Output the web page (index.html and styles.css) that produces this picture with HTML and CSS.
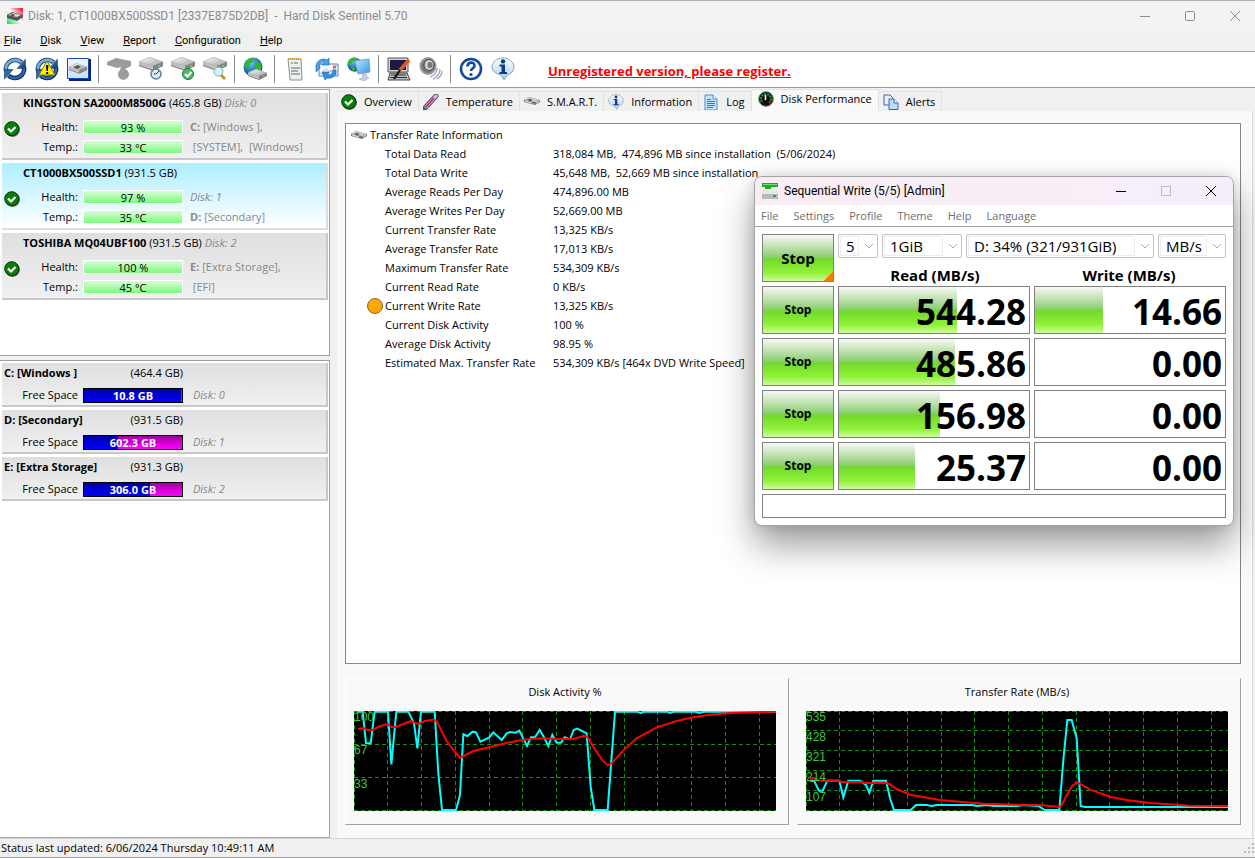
FILE: index.html
```
<!DOCTYPE html>
<html lang="en">
<head>
  <meta charset="UTF-8" />
  <meta name="viewport" content="width=device-width, initial-scale=1.0" />
  <title>Hard Disk Sentinel 5.70</title>
  <link rel="stylesheet" href="styles.css">
</head>
<body>
  <!-- shared icon shapes -->
  <svg class="defs" width="0" height="0">
    <defs>
      <linearGradient id="gBlue" x1="0" y1="0" x2="1" y2="1"><stop offset="0" stop-color="#8fc4ea"/><stop offset=".5" stop-color="#2f6dab"/><stop offset="1" stop-color="#0b2c5e"/></linearGradient>
      <linearGradient id="gDisk" x1="0" y1="0" x2="1" y2="1"><stop offset="0" stop-color="#fafafa"/><stop offset="1" stop-color="#a4a4a4"/></linearGradient>
      <radialGradient id="gGlobe" cx=".4" cy=".3" r=".7"><stop offset="0" stop-color="#6cc4ff"/><stop offset="1" stop-color="#0038a8"/></radialGradient>
      <linearGradient id="gScreen" x1="0" y1="0" x2="1" y2="1"><stop offset="0" stop-color="#b8f0ff"/><stop offset="1" stop-color="#2e93e6"/></linearGradient>
      <linearGradient id="gBubble" x1="0" y1="0" x2="0" y2="1"><stop offset="0" stop-color="#ffffff"/><stop offset="1" stop-color="#a9cfee"/></linearGradient>
      <linearGradient id="gApp" x1="1" y1="0" x2="0" y2="1"><stop offset="0" stop-color="#f00018"/><stop offset=".5" stop-color="#ffffff"/><stop offset="1" stop-color="#00e048"/></linearGradient>
    </defs>
    <symbol id="sync" viewBox="0 0 24 24">
      <path d="M3 14A9.300 9.300 0 0 1 18.500 5.500" fill="none" stroke="#24507e" stroke-width="4.600"/>
      <path d="M3 13.500A9.300 9.300 0 0 1 18 5" fill="none" stroke="#79aed8" stroke-width="2.600"/>
      <path d="M22.500 2v9.500H14z" fill="url(#gBlue)" stroke="#24507e" stroke-width=".6"/>
      <path d="M21 10A9.300 9.300 0 0 1 5.500 18.500" fill="none" stroke="#0d2f62" stroke-width="4.600"/>
      <path d="M21 10.500A9.300 9.300 0 0 1 6 19" fill="none" stroke="#2d66a4" stroke-width="2.400"/>
      <path d="M1.500 22v-9.500H10z" fill="#2f69a6" stroke="#0d2f62" stroke-width=".6"/>
    </symbol>
    <symbol id="hdd" viewBox="0 0 24 14">
      <path d="M0 5L10 0l14 5v4l-10 5L0 9z" fill="#777"/>
      <path d="M0 5L10 0l14 5-10 4z" fill="url(#gDisk)" stroke="#b4b4b4" stroke-width=".5"/>
      <path d="M0 5l14 4v4L0 8z" fill="#c0c0c0"/><path d="M14 9l10-4v4l-10 4z" fill="#858585"/>
      <circle cx="20" cy="9" r="1" fill="#6ddc50"/>
    </symbol>
    <symbol id="hddSmall" viewBox="0 0 16 8">
      <path d="M0 3l5-3 11 3v2l-5 3L0 5z" fill="#777"/><path d="M0 3l5-3 11 3-5 2z" fill="#ccc"/>
      <path d="M3 3l3-1 3 1-3 1z" fill="#444"/><path d="M1 4l7 2M12 6l3-2" stroke="#eee"/>
    </symbol>
    <symbol id="ok" viewBox="0 0 16 16">
      <circle cx="8.6" cy="8.6" r="7.3" fill="#555"/><circle cx="7.7" cy="7.7" r="7" fill="#088008" stroke="#003800"/>
      <path d="M4 7.5l3 3L11.5 6" fill="none" stroke="#fff" stroke-width="2.2"/>
    </symbol>
    <symbol id="info" viewBox="0 0 24 24">
      <path d="M12 1c6 0 11 4 11 9 0 4-3 7-7 8l-3 5-3-5c-5-1-9-4-9-8 0-5 5-9 11-9z" fill="url(#gBubble)" stroke="#86a3c0"/>
      <circle cx="12" cy="4.400" r="2.200" fill="#0c3a8c"/><path d="M8.500 7.500H14V15h2v2H8.500v-2h2V9.500h-2z" fill="#0c3a8c"/>
    </symbol>
    <symbol id="globe" viewBox="0 0 16 16">
      <circle cx="8" cy="8" r="7.6" fill="url(#gGlobe)"/>
      <path d="M2 4c2-3 6-4 7-3L8 4 6 5 5 8 2 9 1 6zM10 3l4 2 1 4-2 4-2-3-2-3zM4 11l4-1 1 4-3 1z" fill="#2fb82f"/>
    </symbol>
  </svg>

  <header class="titlebar">
    <svg class="app-icon" viewBox="0 0 16 16"><path d="M0 0h16v16H0z" fill="url(#gApp)"/><path d="M0 7l5-3 11 3v2l-6 4L0 10z" fill="#555"/><path d="M1 7l5-2 8 2-4 2z" fill="#d8d8d8"/><path d="M3 7l3-1 2 1-2 1z" fill="#333"/></svg>
    <h1>Disk: 1, CT1000BX500SSD1 [2337E875D2DB] &nbsp;-&nbsp; Hard Disk Sentinel 5.70</h1>
    <div class="win-buttons">
      <button aria-label="Minimize"><svg viewBox="0 0 12 12"><path d="M1 6.5h10"/></svg></button>
      <button aria-label="Maximize"><svg viewBox="0 0 12 12"><rect x="1.5" y="1.5" width="9" height="9" rx="1"/></svg></button>
      <button aria-label="Close"><svg viewBox="0 0 12 12"><path d="M1 1l10 10M11 1L1 11"/></svg></button>
    </div>
  </header>

  <nav class="menubar">
    <button><u>F</u>ile</button>
    <button><u>D</u>isk</button>
    <button><u>V</u>iew</button>
    <button><u>R</u>eport</button>
    <button><u>C</u>onfiguration</button>
    <button><u>H</u>elp</button>
  </nav>

  <div class="toolbar">
    <button aria-label="Refresh"><svg viewBox="0 0 24 24"><use href="#sync"/></svg></button>
    <button aria-label="Refresh warnings"><svg viewBox="0 0 24 24"><use href="#sync"/><path d="M12 4l8 14H4z" fill="#fff200" stroke="#8a7a00"/><path d="M11 8h2.4l-.5 6h-1.4zM11.2 15h2v2h-2z" fill="#000"/></svg></button>
    <button aria-label="Disk overview"><svg viewBox="0 0 24 24"><path d="M2 2h22v22H2z" fill="#102060"/><path d="M.5 1.5h21v20H.5z" fill="#cfe2ff" stroke="#1848b8"/><path d="M1 2h20v8H1z" fill="#fff" opacity=".6"/><use href="#hdd" x="2" y="6" width="18" height="11"/><path d="M6 10l5-2 3 2-4 2z" fill="#555"/></svg></button>
    <span class="sep"></span>
    <button aria-label="Disk test" disabled><svg viewBox="0 0 24 24"><path d="M0 5l9-4 15 3v5l-6 3a5.500 5.500 0 1 1-5 1l1-3-4 1L0 8z" fill="#9b9b9b"/></svg></button>
    <button aria-label="Short test"><svg viewBox="0 0 24 24"><use href="#hdd" width="24" height="14"/><circle cx="17" cy="17" r="5" fill="#dcebf7" stroke="#5f7f9c" stroke-width="1.5"/><path d="M17 17l3-3M17 17h-2" stroke="#245" fill="none"/></svg></button>
    <button aria-label="Extended test"><svg viewBox="0 0 24 24"><use href="#hdd" width="24" height="14"/><circle cx="17" cy="17" r="5.5" fill="#48bc62" stroke="#1d7a34"/><path d="M14 17l2.5 2.5L20.5 15" fill="none" stroke="#fff" stroke-width="2"/></svg></button>
    <button aria-label="Surface scan"><svg viewBox="0 0 24 24"><use href="#hdd" width="24" height="14"/><path d="M18 18l4 4" stroke="#d58a34" stroke-width="3"/><circle cx="15.5" cy="14.5" r="4.500" fill="#d6f2ff" stroke="#7aa7c4"/></svg></button>
    <span class="sep"></span>
    <button aria-label="Online"><svg viewBox="0 0 24 24"><use href="#globe" width="20" height="20"/><use href="#hdd" x="5" y="12" width="19" height="11"/></svg></button>
    <span class="sep"></span>
    <button aria-label="Report"><svg viewBox="0 0 24 24"><path d="M5 2h13l1 21H7z" fill="#eaf0ea" stroke="#8a968a"/><path d="M5 2h13" stroke="#c8a040" stroke-width="2" stroke-dasharray="1 1"/><path d="M8 6h2m-2 5h9m-9 3h7m-7 3h9m-6-11h4" stroke="#667"/></svg></button>
    <button aria-label="Send mail"><svg viewBox="0 0 24 24"><path d="M4 7h19v12H4z" fill="#f6faff" stroke="#5a7fae"/><path d="M4 18l7-6 4 3 8-7M15 13l8 5" fill="none" stroke="#9dbade"/><path d="M18 8.500h3v3h-3z" fill="#e46830"/><path d="M1 8C3 2 9 1 12 3l2-2v7H7l2-3C6 4 4 7 5 11l-4 4z" fill="#49a4ec" stroke="#1a5fb0" stroke-width=".6"/><path d="M21 13c1 6-4 9-9 8l-2 2-3-8h7l-1 3c3 0 5-2 5-5z" fill="#2f8fe0" stroke="#1a5fb0" stroke-width=".6"/></svg></button>
    <button aria-label="Network"><svg viewBox="0 0 24 24"><use href="#globe" width="15" height="15"/><path d="M8 4l14-2 1 13-12 2z" fill="url(#gScreen)" stroke="#8d9db5"/><path d="M15 17l4-1 1 4 2 1-5 3-5-2 4-2z" fill="#c9cbe0" stroke="#999cb8" stroke-width=".5"/></svg></button>
    <span class="sep"></span>
    <button aria-label="Configuration"><svg viewBox="0 0 24 24"><path d="M1 1h20v14H1z" fill="#d6d3cc" stroke="#555"/><path d="M3 3h16v10H3z" fill="#1d1848"/><path d="M3 16h17l3 7H1z" fill="#bbb" stroke="#444"/><path d="M4 18h15M3 20.5h17" stroke="#333"/><path d="M22 3l-9 10" stroke="#e05a20" stroke-width="3.5"/><path d="M13 13l-6 9" stroke="#111" stroke-width="2"/></svg></button>
    <button aria-label="Sound"><svg viewBox="0 0 24 24"><ellipse cx="9" cy="9" rx="7.500" ry="8" fill="#777" stroke="#999" stroke-width="2"/><ellipse cx="10" cy="8" rx="5" ry="5.500" fill="#ccc" stroke="#444"/><ellipse cx="11" cy="8" rx="2.500" ry="3" fill="#777"/><path d="M11 20c4-1 7-5 7-9M14 22c4-2 7-6 7-10M18 22c3-2 5-5 5-8" fill="none" stroke="#a9aac8" stroke-width="1.5"/></svg></button>
    <span class="sep"></span>
    <button aria-label="Help"><svg viewBox="0 0 24 24"><circle cx="12" cy="12" r="10" fill="#fff" stroke="#124a9e" stroke-width="2.6"/><path d="M8.5 9.500c0-5 7-5 7-.8 0 2.800-3.500 2.500-3.500 5.300" fill="none" stroke="#124a9e" stroke-width="2.6"/><circle cx="12" cy="17.5" r="1.6" fill="#124a9e"/></svg></button>
    <button aria-label="About"><svg viewBox="0 0 24 24"><use href="#info"/></svg></button>
    <a class="register" href="#register">Unregistered version, please register.</a>
  </div>

  <main>
    <aside>
      <section class="disks">
        <div class="disk">
          <h2>KINGSTON SA2000M8500G <span>(465.8 GB)</span> <i>Disk: 0</i></h2>
          <svg class="status" viewBox="0 0 16 16"><use href="#ok"/></svg>
          <span class="label">Health:</span><div class="meter">93 %</div><span class="note"><b>C:</b> [Windows ],</span>
          <span class="label">Temp.:</span><div class="meter">33 °C</div><span class="note">&nbsp;[SYSTEM],&nbsp; [Windows]</span>
        </div>
        <div class="disk selected">
          <h2>CT1000BX500SSD1 <span>(931.5 GB)</span></h2>
          <svg class="status" viewBox="0 0 16 16"><use href="#ok"/></svg>
          <span class="label">Health:</span><div class="meter">97 %</div><span class="note"><i>Disk: 1</i></span>
          <span class="label">Temp.:</span><div class="meter">35 °C</div><span class="note"><b>D:</b> [Secondary]</span>
        </div>
        <div class="disk">
          <h2>TOSHIBA MQ04UBF100 <span>(931.5 GB)</span> <i>Disk: 2</i></h2>
          <svg class="status" viewBox="0 0 16 16"><use href="#ok"/></svg>
          <span class="label">Health:</span><div class="meter">100 %</div><span class="note"><b>E:</b> [Extra Storage],</span>
          <span class="label">Temp.:</span><div class="meter">45 °C</div><span class="note">&nbsp;[EFI]</span>
        </div>
      </section>

      <section class="volumes">
        <div class="volume">
          <h3>C: [Windows ]</h3><span class="size">(464.4 GB)</span>
          <span class="label">Free Space</span>
          <div class="space"><div class="used" style="width: 99%"></div><span>10.8 GB</span></div>
          <i>Disk: 0</i>
        </div>
        <div class="volume">
          <h3>D: [Secondary]</h3><span class="size">(931.5 GB)</span>
          <span class="label">Free Space</span>
          <div class="space"><div class="used" style="width: 35%"></div><span>602.3 GB</span></div>
          <i>Disk: 1</i>
        </div>
        <div class="volume">
          <h3>E: [Extra Storage]</h3><span class="size">(931.3 GB)</span>
          <span class="label">Free Space</span>
          <div class="space"><div class="used" style="width: 67%"></div><span>306.0 GB</span></div>
          <i>Disk: 2</i>
        </div>
      </section>
    </aside>

    <div class="content">
      <div class="tabs" role="tablist">
        <button role="tab"><svg viewBox="0 0 16 16"><use href="#ok"/></svg>Overview</button>
        <button role="tab"><svg viewBox="0 0 16 16"><path d="M2 14L13 2" stroke="#55486a" stroke-width="5" stroke-linecap="round"/><path d="M3 13L13 2" stroke="#d8c8dc" stroke-width="3" stroke-linecap="round"/><path d="M2.5 13.5L11 4" stroke="#c81c50" stroke-width="1.5"/></svg>Temperature</button>
        <button role="tab"><svg viewBox="0 0 16 16"><use href="#hddSmall" y="3" width="16" height="8"/></svg>S.M.A.R.T.</button>
        <button role="tab"><svg viewBox="0 0 24 24"><use href="#info"/></svg>Information</button>
        <button role="tab"><svg viewBox="0 0 16 16"><path d="M2 1h8l4 4v11H2z" fill="#c4e4ff" stroke="#4c8cd0"/><path d="M10 1v4h4" fill="#fff" stroke="#4c8cd0"/><path d="M4 5.5h4M4 7.5h8M4 9.5h8M4 11.5h8M4 13.5h6" stroke="#3474c0"/></svg>Log</button>
        <button role="tab" class="active" aria-selected="true"><svg viewBox="0 0 16 16"><circle cx="8" cy="8" r="7.3" fill="#111" stroke="#777"/><path d="M4 11a5 5 0 1 1 8 0" fill="none" stroke="#20a030" stroke-width="2" stroke-dasharray="2 1"/><path d="M12 11l-1 1" stroke="#e02020" stroke-width="2"/><path d="M7.5 4v5" stroke="#fff" stroke-width="1.5"/></svg>Disk Performance</button>
        <button role="tab"><svg viewBox="0 0 16 16"><path d="M1 1h6l3 3v7H1z" fill="#e8f2ff" stroke="#4464a8"/><path d="M6 5h5l4 4v6.500H6z" fill="#bcdcff" stroke="#4464a8"/><path d="M11 5v4h4" fill="#fff" stroke="#4464a8"/></svg>Alerts</button>
      </div>

      <div class="page">
        <div class="info-box">
          <div class="info-head"><svg viewBox="0 0 16 8"><use href="#hddSmall"/></svg>Transfer Rate Information</div>
          <table>
            <tr><td></td><th>Total Data Read</th><td>318,084 MB,&nbsp; 474,896 MB since installation&nbsp; (5/06/2024)</td></tr>
            <tr><td></td><th>Total Data Write</th><td>45,648 MB,&nbsp; 52,669 MB since installation</td></tr>
            <tr><td></td><th>Average Reads Per Day</th><td>474,896.00 MB</td></tr>
            <tr><td></td><th>Average Writes Per Day</th><td>52,669.00 MB</td></tr>
            <tr><td></td><th>Current Transfer Rate</th><td>13,325 KB/s</td></tr>
            <tr><td></td><th>Average Transfer Rate</th><td>17,013 KB/s</td></tr>
            <tr><td></td><th>Maximum Transfer Rate</th><td>534,309 KB/s</td></tr>
            <tr><td></td><th>Current Read Rate</th><td>0 KB/s</td></tr>
            <tr><td><span class="dot"></span></td><th>Current Write Rate</th><td>13,325 KB/s</td></tr>
            <tr><td></td><th>Current Disk Activity</th><td>100 %</td></tr>
            <tr><td></td><th>Average Disk Activity</th><td>98.95 %</td></tr>
            <tr><td></td><th>Estimated Max. Transfer Rate</th><td>534,309 KB/s [464x DVD Write Speed]</td></tr>
          </table>
        </div>

        <div class="charts">
          <figure>
            <figcaption>Disk Activity %</figcaption>
            <div class="plot">
              <svg viewBox="42 123 1266 300" preserveAspectRatio="none">
                <path class="grid" d="M43 123v300M142 123v300M244 123v300M346 123v300M448 123v300M547 123v300M649 123v300M751 123v300M853 123v300M952 123v300M1054 123v300M1156 123v300M1258 123v300M42 124.5H1308M42 223.5H1308M42 322.5H1308M42 421.5H1308"/>
                <polyline class="now" points="52,125 68,125 78,220 92,220 104,125 144,125 154,283 169,125 205,125 222,160 232,235 243,125 284,125 295,310 306,420 348,420 360,375 370,193 382,198 398,185 408,187 421,215 447,203 460,187 485,210 500,190 510,186 527,188 538,182 561,228 573,202 585,202 599,180 612,202 625,228 637,195 650,218 663,218 674,202 690,208 701,180 712,176 740,190 752,350 763,420 803,420 825,125 890,125 902,129 915,125 980,125 990,129 1003,125 1065,125 1078,129 1092,125 1308,125"/>
                <polyline class="avg" points="54,177 70,174 80,179 98,180 115,170 142,162 155,171 168,171 190,162 212,153 235,162 255,153 278,149 290,153 318,210 340,240 360,264 400,243 450,231 500,219 545,210 600,205 650,207 700,207 730,198 742,200 760,230 785,268 803,286 815,280 850,241 890,205 950,172 1010,153 1060,142 1110,134 1170,129 1308,125"/>
              </svg>
              <div class="scale thirds"><span>100</span><span>67</span><span>33</span></div>
            </div>
          </figure>
          <figure>
            <figcaption>Transfer Rate (MB/s)</figcaption>
            <div class="plot">
              <svg viewBox="48 123 1266 300" preserveAspectRatio="none">
                <path class="grid" d="M49 123v300M148 123v300M250 123v300M352 123v300M454 123v300M553 123v300M655 123v300M757 123v300M859 123v300M958 123v300M1060 123v300M1162 123v300M1264 123v300M48 124.5H1314M48 181.5H1314M48 241.5H1314M48 301.5H1314M48 361.5H1314M48 421.5H1314"/>
                <polyline class="now" points="60,332 72,332 87,362 98,362 112,332 148,332 160,382 175,332 210,332 228,345 238,368 250,332 288,332 300,385 312,420 362,420 378,405 410,405 425,408 440,405 545,405 560,408 590,405 610,408 680,408 700,405 745,408 765,420 808,420 820,270 832,150 845,150 860,205 872,408 885,411 1314,411"/>
                <polyline class="avg" points="60,325 72,324 88,332 145,332 155,336 210,336 225,339 290,339 300,343 320,357 360,374 400,381 450,390 510,395 580,401 680,404 750,405 800,410 812,410 828,380 845,350 860,336 900,359 960,380 1010,390 1080,399 1200,407 1314,408"/>
              </svg>
              <div class="scale fifths"><span>535</span><span>428</span><span>321</span><span>214</span><span>107</span></div>
            </div>
          </figure>
        </div>
      </div>
    </div>
  </main>

  <footer>
    <span>Status last updated: 6/06/2024 Thursday 10:49:11 AM</span>
    <svg class="grip" viewBox="0 0 12 12"><path d="M9 1h2v2H9zM5 5h2v2H5zM9 5h2v2H9zM1 9h2v2H1zM5 9h2v2H5zM9 9h2v2H9z" fill="#b8b8b8"/></svg>
  </footer>

  <!-- benchmark window on top -->
  <div class="bench">
    <div class="bench-title">
      <svg viewBox="0 0 16 16"><path d="M0 0h16v4H9v2H3V4H0z" fill="#18b028"/><path d="M1 1h14v1H1z" fill="#70e070"/><path d="M2 7h12l2 4v5H0v-5z" fill="#b8bcbc"/><path d="M2 7h12l2 4H0z" fill="#e6e8e8"/><path d="M11 12h3v2h-3z" fill="#28a838"/></svg>
      <h2>Sequential Write (5/5) [Admin]</h2>
      <div class="win-buttons">
        <button aria-label="Minimize"><svg viewBox="0 0 12 12"><path d="M1 6.5h10"/></svg></button>
        <button aria-label="Maximize" disabled><svg viewBox="0 0 12 12"><rect x="1.5" y="1.5" width="9" height="9"/></svg></button>
        <button aria-label="Close"><svg viewBox="0 0 12 12"><path d="M1 1l10 10M11 1L1 11"/></svg></button>
      </div>
    </div>
    <nav class="bench-menu">
      <button>File</button><button>Settings</button><button>Profile</button><button>Theme</button><button>Help</button><button>Language</button>
    </nav>
    <div class="bench-body">
      <button class="stop all">Stop</button>
      <div class="options">
        <div class="selects">
          <div class="combo count"><select aria-label="Test count"><option>5</option></select><svg viewBox="0 0 10 6"><path d="M1 1l4 4 4-4"/></svg></div>
          <div class="combo unit-size"><select aria-label="Test size"><option>1GiB</option></select><svg viewBox="0 0 10 6"><path d="M1 1l4 4 4-4"/></svg></div>
          <div class="combo drive"><select aria-label="Drive"><option>D: 34% (321/931GiB)</option></select><svg viewBox="0 0 10 6"><path d="M1 1l4 4 4-4"/></svg></div>
          <div class="combo unit"><select aria-label="Unit"><option>MB/s</option></select><svg viewBox="0 0 10 6"><path d="M1 1l4 4 4-4"/></svg></div>
        </div>
        <div class="heads"><b>Read (MB/s)</b><b>Write (MB/s)</b></div>
      </div>
      <button class="stop">Stop</button>
      <div class="result"><div class="fill" style="width: 62%"></div><span>544.28</span></div>
      <div class="result"><div class="fill" style="width: 36%"></div><span>14.66</span></div>
      <button class="stop">Stop</button>
      <div class="result"><div class="fill" style="width: 61%"></div><span>485.86</span></div>
      <div class="result"><span>0.00</span></div>
      <button class="stop">Stop</button>
      <div class="result"><div class="fill" style="width: 53%"></div><span>156.98</span></div>
      <div class="result"><span>0.00</span></div>
      <button class="stop">Stop</button>
      <div class="result"><div class="fill" style="width: 40%"></div><span>25.37</span></div>
      <div class="result"><span>0.00</span></div>
      <div class="comment"></div>
    </div>
  </div>
</body>
</html>
```
FILE: styles.css
```
* {
  box-sizing: border-box;
}
body {
  margin: 0;
  height: 100vh;
  display: flex;
  flex-direction: column;
  overflow: hidden;
  background: #f0f0f0;
  color: #000;
  font-family: "Open Sans", "Noto Sans", sans-serif;
  font-size: 11px;
  line-height: 16px;
}
h1, h2, h3, figure {
  margin: 0;
  font-size: inherit;
}
button, select {
  font: inherit;
  color: inherit;
  background: none;
  border: none;
  padding: 0;
  margin: 0;
}
svg {
  display: block;
}
.defs {
  position: absolute;
}

/* title bar and menu */
.titlebar {
  display: flex;
  align-items: center;
  height: 31px;
  flex: none;
  padding-left: 7px;
  background: #f3f3f3;
  border-top: 1px solid #b0b0b8;
  color: #8c8c8c;
}
.titlebar h1 {
  flex: 1;
  margin-left: 5px;
  font-family: Roboto, "Open Sans", sans-serif;
  font-size: 12px;
  font-weight: normal;
}
.titlebar .win-buttons {
  margin-right: -2px;
}
.app-icon {
  width: 16px;
  height: 16px;
}
.win-buttons {
  display: flex;
}
.win-buttons button {
  width: 45px;
  height: 28px;
  display: grid;
  place-items: center;
}
.win-buttons svg {
  width: 12px;
  height: 12px;
  fill: none;
  stroke: currentColor;
}
.win-buttons button:disabled {
  color: #c4bcc4;
}
.menubar {
  display: flex;
  gap: 19px;
  height: 21px;
  flex: none;
  padding-left: 4px;
  border-bottom: 1px solid #a0a0a0;
  font-family: Roboto, "Open Sans", sans-serif;
}
.toolbar {
  display: flex;
  align-items: center;
  height: 36px;
  flex: none;
  padding-bottom: 2px;
  background: #fff;
  border-bottom: 1px solid #999;
}
.toolbar button {
  width: 32px;
  height: 32px;
  display: grid;
  place-items: center start;
  padding-left: 3px;
}
.toolbar button svg {
  width: 24px;
  height: 24px;
}
.sep {
  width: 2px;
  height: 28px;
  margin: 0 4px 0 2px;
  border-left: 1px solid #888;
}
.register {
  margin: 5px 0 0 28px;
  color: #f00;
  font-size: 13px;
  font-weight: bold;
}

/* left column */
main {
  flex: 1;
  min-height: 0;
  display: flex;
  padding-top: 1px;
}
aside {
  width: 330px;
  flex: none;
  display: flex;
  flex-direction: column;
  gap: 4px;
}
.disks, .volumes {
  background: #fff;
  border: 1px solid #a0a0a0;
  border-left: none;
  padding: 3px 1px 0 2px;
}
.disks {
  height: 267px;
}
.volumes {
  flex: 1;
  padding-top: 2px;
}
.disk, .volume {
  background: linear-gradient(#dfdfdf, #f0f0f0);
  border-right: 2px solid #c8c8c8;
  border-bottom: 2px solid #c8c8c8;
}
.disk {
  display: grid;
  grid-template-columns: 20px 56px 100px 1fr;
  grid-template-rows: 24px 20px 20px;
  align-items: center;
  height: 67px;
  margin-bottom: 3px;
}
.disk.selected {
  background: linear-gradient(#aeeeff, #fff);
  border-color: #ddd;
}
.disk h2 {
  grid-column: 1 / -1;
  padding: 0 0 5px 21px;
  white-space: nowrap;
}
.disk h2 span, .disk h2 i {
  font-weight: normal;
}
i, .note {
  color: #888;
}
.status {
  grid-row: 2 / 4;
  align-self: start;
  width: 16px;
  height: 16px;
  margin: 4px 0 0 2px;
}
.label {
  text-align: right;
  white-space: nowrap;
}
.disk .meter {
  grid-column: 3;
  margin-left: 5px;
  width: 100px;
  height: 14px;
  border: 1px solid #fff;
  background: linear-gradient(#d8fbd8, #7dfb7d);
  text-align: center;
  line-height: 14px;
}
.disk .note {
  padding-left: 12px;
}
.volume {
  display: grid;
  grid-template-columns: 76px 100px 1fr;
  grid-template-rows: 22px 20px;
  align-items: center;
  column-gap: 5px;
  height: 44px;
  margin-bottom: 3px;
}
.volume h3 {
  grid-row: 1;
  grid-column: 1 / 3;
  padding: 0 0 3px 2px;
}
.volume .size {
  grid-row: 1;
  grid-column: 2;
  padding-bottom: 3px;
  text-align: right;
}
.volume .label {
  grid-column: 1;
}
.volume i {
  padding-left: 5px;
}
.space {
  display: grid;
  height: 15px;
  border: 1px solid #000;
  background: linear-gradient(#a000a0, #ff00ff);
  color: #fff;
  font-weight: bold;
}
.space > * {
  grid-area: 1 / 1;
}
.space span {
  text-align: center;
  line-height: 13px;
}
.used {
  background: linear-gradient(#0000a8, #0000ff);
}

/* right side */
.content {
  flex: 1;
  min-width: 0;
  display: flex;
  flex-direction: column;
  padding: 0 2px 0 7px;
}
.tabs {
  display: flex;
  align-items: flex-end;
  height: 22px;
}
.tabs button {
  display: flex;
  align-items: center;
  gap: 7px;
  height: 20px;
  padding: 0 6px 0 4px;
  border: 1px solid #e2e2e2;
  border-width: 1px 1px 0 0;
  white-space: nowrap;
}
.tabs .active {
  height: 22px;
  padding-bottom: 3px;
  padding-left: 6px;
  background: #f9f9f9;
}
.tabs svg {
  width: 16px;
  height: 16px;
}
.page {
  flex: 1;
  min-height: 0;
  display: flex;
  flex-direction: column;
  gap: 14px;
  padding: 12px 11px 13px 8px;
  background: #f9f9f9;
  border-right: 1px solid #ddd;
}
.info-box {
  flex: 1;
  background: #fff;
  border: 1px solid #828790;
  padding: 1px 5px;
}
.info-head {
  display: flex;
  align-items: center;
  gap: 3px;
  height: 19px;
}
.info-head svg {
  width: 16px;
  height: 8px;
}
table {
  border-collapse: collapse;
  margin-left: 14px;
}
td, th {
  height: 19px;
  padding: 0;
  text-align: left;
  font-weight: normal;
  white-space: nowrap;
}
td:first-child {
  width: 20px;
}
th {
  width: 168px;
}
.dot {
  display: block;
  width: 16px;
  height: 16px;
  margin-left: 2px;
  border: 1px solid #86662a;
  border-radius: 50%;
  background: #ffa800;
}
.charts {
  display: flex;
  gap: 8px;
}
figure {
  flex: 1;
  min-width: 0;
  padding: 5px 12px 13px 8px;
  border: 1px solid #fff;
  border-right-color: #a0a0a0;
  border-bottom-color: #a0a0a0;
}
figcaption {
  text-align: center;
  margin-bottom: 11px;
}
.plot {
  position: relative;
  height: 100px;
  background: #000;
}
.plot svg {
  width: 100%;
  height: 100%;
}
.plot svg * {
  fill: none;
  stroke-width: 2;
  vector-effect: non-scaling-stroke;
}
.plot .grid {
  stroke: #149014;
  stroke-width: 1;
  stroke-dasharray: 4 3;
  shape-rendering: crispEdges;
}
.now {
  stroke: #00ffff;
}
.avg {
  stroke: #ff0000;
}
.scale {
  position: absolute;
  inset: 0 auto 0 0;
  display: grid;
  color: #3cc83c;
  font: 12px/12px "Liberation Sans", Arial, sans-serif;
}
.thirds {
  grid-template-rows: repeat(3, 1fr);
}
.fifths {
  grid-template-rows: repeat(5, 1fr);
}

footer {
  display: flex;
  justify-content: space-between;
  align-items: center;
  height: 20px;
  flex: none;
  padding-left: 1px;
  border-top: 1px solid #d4d4d4;
  border-bottom: 1px solid #a0a0a0;
}
.grip {
  width: 12px;
  height: 12px;
}

/* benchmark window */
.bench {
  position: absolute;
  left: 754px;
  top: 176px;
  width: 480px;
  background: #fff;
  border: 1px solid #a4a4a4;
  border-radius: 8px;
  box-shadow: 0 20px 36px rgba(0, 0, 0, 0.38), 0 0 14px rgba(0, 0, 0, 0.14);
}
.bench-title {
  display: flex;
  align-items: center;
  height: 28px;
  padding-left: 7px;
  border-radius: 8px 8px 0 0;
  background: linear-gradient(90deg, #f9edf5, #f5eef9);
}
.bench-title > svg {
  width: 16px;
  height: 16px;
}
.bench-title h2 {
  flex: 1;
  margin-left: 6px;
  font-family: Roboto, "Open Sans", sans-serif;
  font-size: 12px;
  font-weight: normal;
}
.bench-menu {
  display: flex;
  gap: 15px;
  height: 22px;
  padding-left: 6px;
  border-bottom: 1px solid #a0a0a0;
  color: #6d6d6d;
}
.bench-body {
  display: grid;
  grid-template-columns: 72px 1fr 1fr;
  grid-template-rows: repeat(5, 48px) 24px;
  gap: 4px;
  padding: 7px;
}
.stop, .fill {
  background: linear-gradient(#f8f8f8, #8fcf74 47%, #72d82c 52%, #90f238 82%, #ccfb9c);
}
.stop {
  border: 1px solid #808080;
  font-size: 12px;
  font-weight: bold;
}
.stop.all {
  font-size: 15px;
  background: linear-gradient(135deg, transparent 92%, #ff7a00 92%), linear-gradient(#f8f8f8, #8fcf74 47%, #72d82c 52%, #90f238 82%, #ccfb9c);
}
.options {
  grid-column: 2 / 4;
}
.selects {
  display: flex;
  gap: 4px;
}
.combo {
  display: flex;
  align-items: center;
  height: 24px;
  padding: 1px 3px 1px 1px;
  border: 1px solid #c4c4c4;
  border-radius: 2px;
}
.combo select {
  flex: 1;
  min-width: 0;
  height: 20px;
  margin-right: 5px;
  padding-left: 5px;
  border: 1px solid #ededed;
  appearance: none;
  font-size: 15px;
  line-height: 18px;
}
.combo svg {
  width: 10px;
  height: 6px;
  fill: none;
  stroke: #aaa;
}
.count {
  width: 40px;
}
.unit-size {
  width: 80px;
}
.drive {
  flex: 1;
}
.unit {
  width: 68px;
}
.heads {
  display: grid;
  grid-template-columns: 1fr 1fr;
  padding-top: 5px;
  font-size: 15px;
  line-height: 24px;
  text-align: center;
}
.result {
  display: grid;
  grid-template-rows: 100%;
  border: 1px solid #808080;
}
.result > * {
  grid-area: 1 / 1;
}
.result span {
  padding-right: 3px;
  text-align: right;
  font-size: 35px;
  font-weight: bold;
  line-height: 50px;
}
.comment {
  grid-column: 1 / -1;
  border: 1px solid #808080;
}
```
